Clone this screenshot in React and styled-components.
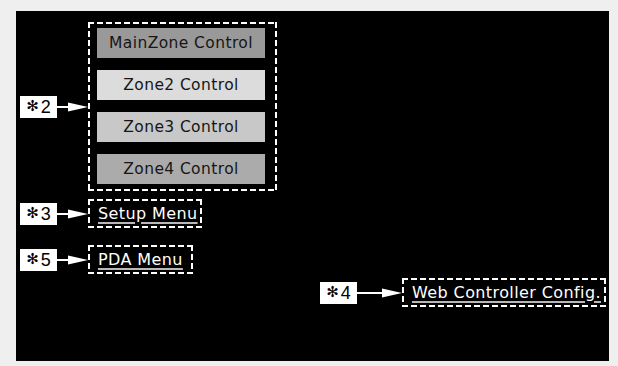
import styled, { createGlobalStyle } from 'styled-components';

const GlobalStyle = createGlobalStyle`
  body {
    margin: 0;
    background: #eeefee;
  }
`;

const Page = styled.div`
  padding: 11px 9px 5px 16px;
`;

const Panel = styled.div`
  width: 593px;
  height: 350px;
  box-sizing: border-box;
  background: #000;
  padding: 11px 3px 0 4px;
  display: flex;
  flex-direction: column;
`;

const Row = styled.div`
  display: flex;
  align-items: center;
  justify-content: ${(p) => (p.$right ? 'flex-end' : 'flex-start')};
  margin-top: ${(p) => p.$top || 0}px;
`;

const Callout = styled.div`
  width: 37px;
  height: 22px;
  background: #fff;
  color: #000;
  display: flex;
  align-items: center;
  justify-content: center;
  gap: 2px;
  font-family: 'Liberation Sans', Arial, sans-serif;
  font-size: 18px;
  line-height: 1;
`;

const Star = styled.span`
  font-family: 'DejaVu Sans', sans-serif;
  font-size: 15px;
`;

const dash = `
  background:
    linear-gradient(90deg, #fff 6px, transparent 0) top left / 9px 2px repeat-x,
    linear-gradient(90deg, #fff 6px, transparent 0) bottom left / 9px 2px repeat-x,
    linear-gradient(180deg, #fff 6px, transparent 0) top left / 2px 9px repeat-y,
    linear-gradient(180deg, #fff 6px, transparent 0) top right / 2px 9px repeat-y;
`;

const ZoneBox = styled.div`
  ${dash}
  box-sizing: border-box;
  width: 189px;
  height: 169px;
  padding: 6px 12px 0 9px;
  display: flex;
  flex-direction: column;
  gap: 12px;
`;

const ZoneButton = styled.div`
  height: 30px;
  background: ${(p) => p.$bg};
  color: #161616;
  display: flex;
  align-items: center;
  justify-content: center;
  font-family: 'DejaVu Sans', Verdana, sans-serif;
  font-size: 15.5px;
  letter-spacing: 0.4px;
`;

const LinkBox = styled.div`
  ${dash}
  box-sizing: border-box;
  height: 29px;
  width: ${(p) => p.$w}px;
  padding-left: 10px;
  display: flex;
  align-items: center;
`;

const LinkText = styled.span`
  color: #fff;
  font-family: 'DejaVu Sans', Verdana, sans-serif;
  font-size: 16px;
  letter-spacing: 0.4px;
  text-decoration: underline;
  text-decoration-color: #b8b8b8;
  text-decoration-thickness: 2px;
  text-underline-offset: 3px;
  margin-top: -1px;
`;

const Arrow = ({ width }) => (
  <svg width={width} height="12" viewBox={`0 0 ${width} 12`} style={{ display: 'block' }}>
    <line x1="0" y1="6" x2={width - 16} y2="6" stroke="#fff" strokeWidth="2" />
    <polygon points={`${width - 20},1.5 ${width},6 ${width - 20},10.5`} fill="#fff" />
  </svg>
);

const Label = ({ n, arrow = 31 }) => (
  <>
    <Callout>
      <Star>✻</Star>
      {n}
    </Callout>
    <Arrow width={arrow} />
  </>
);

const zones = [
  { name: 'MainZone Control', bg: '#999999' },
  { name: 'Zone2 Control', bg: '#dcdcdc' },
  { name: 'Zone3 Control', bg: '#c8c8c8' },
  { name: 'Zone4 Control', bg: '#ababab' },
];

export default function App() {
  return (
    <>
      <GlobalStyle />
      <Page>
        <Panel>
          <Row>
            <Label n="2" />
            <ZoneBox>
              {zones.map((z) => (
                <ZoneButton key={z.name} $bg={z.bg}>
                  {z.name}
                </ZoneButton>
              ))}
            </ZoneBox>
          </Row>
          <Row $top={8}>
            <Label n="3" />
            <LinkBox $w={114}>
              <LinkText>Setup Menu</LinkText>
            </LinkBox>
          </Row>
          <Row $top={17}>
            <Label n="5" />
            <LinkBox $w={105}>
              <LinkText>PDA Menu</LinkText>
            </LinkBox>
          </Row>
          <Row $top={4} $right>
            <Label n="4" arrow={45} />
            <LinkBox $w={204}>
              <LinkText>Web Controller Config.</LinkText>
            </LinkBox>
          </Row>
        </Panel>
      </Page>
    </>
  );
}
